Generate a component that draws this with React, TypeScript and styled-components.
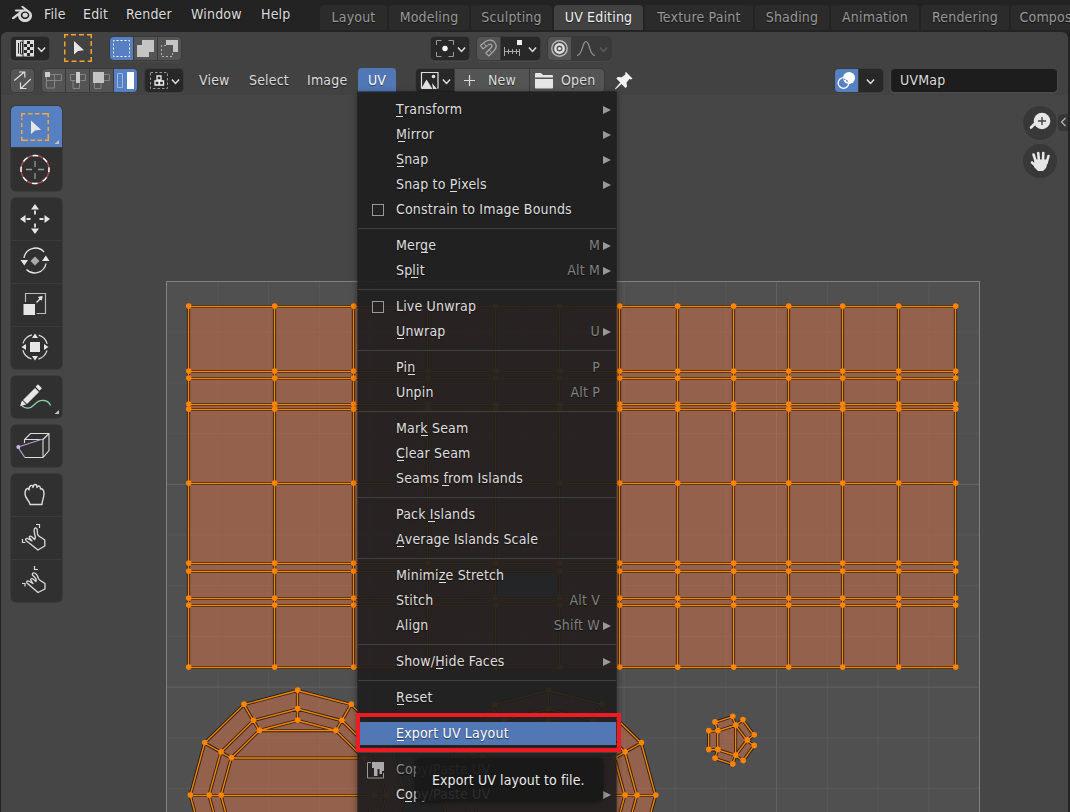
import React from 'react';
import styled, { createGlobalStyle, css } from 'styled-components';
import { SiBlender } from 'react-icons/si';

const GlobalStyle = createGlobalStyle`
  * { box-sizing: border-box; }
  body {
    margin: 0;
    overflow: hidden;
    background: #232323;
    color: #dcdcdc;
    font: 14px/25px 'DejaVu Sans Condensed', 'DejaVu Sans', sans-serif;
    letter-spacing: 0.18px;
    text-shadow: 0 1px 1px rgba(0, 0, 0, 0.55);
  }
  svg { display: block; flex: none; }
`;

const Window = styled.div`
  position: relative;
  display: flex;
  flex-direction: column;
  width: 1070px;
  height: 812px;
  overflow: hidden;
`;

const TopBar = styled.header`
  display: flex;
  flex: none;
  height: 32px;
  padding-left: 12px;
`;

const Logo = styled.div`
  flex: none;
  width: 32px;
  padding-top: 4px;
  color: #d8d8d8;
`;

const AppMenu = styled.span<{ $w: number }>`
  flex: none;
  width: ${(p) => p.$w}px;
  line-height: 28px;
`;

const Tabs = styled.nav`
  display: flex;
  flex: none;
  gap: 2px;
  padding-top: 5px;
`;

const Tab = styled.div<{ $w: number; $active?: boolean }>`
  flex: none;
  width: ${(p) => p.$w}px;
  height: 25px;
  border-radius: 4px 4px 0 0;
  text-align: center;
  white-space: nowrap;
  background: ${(p) => (p.$active ? '#424242' : '#2b2b2b')};
  color: ${(p) => (p.$active ? '#f0f0f0' : '#989898')};
`;

const Editor = styled.main`
  display: flex;
  flex-direction: column;
  flex: 1;
  min-height: 0;
  margin: 0 2px 0 1px;
  border-radius: 6px 6px 0 0;
  overflow: hidden;
  background: #424242;
`;

const HeaderRow = styled.div<{ $h: number; $top: number }>`
  display: flex;
  align-items: flex-start;
  flex: none;
  height: ${(p) => p.$h}px;
  padding: ${(p) => p.$top}px 0 0 10px;
`;

const Group = styled.div<{ $ml?: number }>`
  display: flex;
  flex: none;
  gap: 1px;
  height: 23px;
  margin-left: ${(p) => p.$ml ?? 0}px;
  border-radius: 4px;
  overflow: hidden;
  background: #3a3a3a;
  box-shadow: 0 0 0 1px #3b3b3b, 0 1px 0 1px #4a4a4a;
`;

const ActiveTool = styled.div`
  flex: none;
  margin: -3px 0 0 14px;
`;

const tones = { dark: '#282828', mid: '#545454', blue: '#5680c2', dim: '#3a3a3a' };

const Cell = styled.div<{ $w: number; $tone: keyof typeof tones }>`
  display: flex;
  flex: none;
  width: ${(p) => p.$w}px;
  height: 23px;
  line-height: 23px;
  background: ${(p) => tones[p.$tone]};
`;

const HeaderMenu = styled.span<{ $w: number; $ml?: number }>`
  width: ${(p) => p.$w}px;
  margin-left: ${(p) => p.$ml ?? 0}px;
  line-height: 23px;
`;

const ActiveMenu = styled.div`
  width: 38px;
  height: 25px;
  margin-top: -1px;
  border-radius: 4px 4px 0 0;
  background: #5277b5;
  color: #fff;
  text-align: center;
`;

const Field = styled.div`
  width: 166px;
  height: 23px;
  margin-left: 8px;
  padding-left: 9px;
  border-radius: 4px;
  background: #1d1d1d;
  line-height: 23px;
  box-shadow: 0 1px 0 1px #4a4a4a;
`;

const Canvas = styled.section`
  position: relative;
  display: flex;
  justify-content: space-between;
  flex: 1;
  background: #464646;
`;

const Drawing = styled.svg`
  position: absolute;
  left: 0;
  top: 0;
`;

const Palette = styled.div`
  position: relative;
  display: flex;
  flex-direction: column;
  gap: 7px;
  padding: 11px 0 0 10px;
`;

const ToolGroup = styled.div`
  display: flex;
  flex-direction: column;
  gap: 1px;
  width: 51px;
  border-radius: 5px;
  overflow: hidden;
  background: #3a3a3a;
  box-shadow: 0 0 0 1px #3c3c3c;
`;

const Tool = styled.div<{ $h: number; $active?: boolean }>`
  height: ${(p) => p.$h}px;
  background: ${(p) => (p.$active ? '#5680c2' : '#303030')};
`;

const Gizmos = styled.div`
  position: relative;
  display: flex;
  align-items: flex-start;
  gap: 1px;
  padding-top: 11px;
`;

const GizmoColumn = styled.div`
  display: flex;
  flex-direction: column;
  gap: 4px;
`;

const Gizmo = styled.div`
  width: 34px;
  height: 34px;
  border-radius: 50%;
  background: #383838;
`;

const SidebarHandle = styled.div`
  width: 10px;
  height: 17px;
  margin-top: 8px;
  border-radius: 4px 0 0 4px;
  background: #363636;
`;

const Dropdown = styled.div`
  position: absolute;
  left: 358px;
  top: 92px;
  width: 258px;
  height: 730px;
  padding-top: 5px;
  background: rgba(30, 30, 30, 0.92);
  box-shadow: 0 0 0 1px rgba(20, 20, 20, 0.45), 0 2px 6px 1px rgba(0, 0, 0, 0.4);
`;

const Item = styled.div<{ $hot?: boolean; $disabled?: boolean }>`
  display: grid;
  grid-template-columns: 38px 1fr auto 16px;
  align-items: center;
  height: 25px;
  white-space: nowrap;
  color: ${(p) => (p.$disabled ? '#8a8a8a' : '#dedede')};
  ${(p) =>
    p.$hot &&
    css`
      color: #fff;
      background: linear-gradient(#5277b5, #5277b5) 2px 1px / 256px 23px no-repeat;
    `}
`;

const Mark = styled.span<{ $pad?: number }>`
  display: flex;
  padding-left: ${(p) => p.$pad ?? 14}px;
`;

const CheckBox = styled.span`
  width: 12px;
  height: 12px;
  border: 1px solid #999;
`;

const Shortcut = styled.span`
  color: #808080;
`;

const Arrow = styled.span`
  width: 8px;
  height: 8px;
  margin: 1px 0 0 3px;
  background: #999;
  clip-path: polygon(0 0, 100% 50%, 0 100%);
`;

const Rule = styled.div`
  height: 11px;
  padding-top: 6px;
  &::before {
    content: '';
    display: block;
    height: 1px;
    background: #414141;
  }
`;

const Key = styled.span`
  position: relative;
  &::after {
    content: '';
    position: absolute;
    left: calc(50% - 3.5px);
    top: 15px;
    width: 7px;
    height: 1px;
    background: currentColor;
  }
`;

const Callout = styled.div`
  position: absolute;
  left: 356px;
  top: 713px;
  width: 265px;
  height: 39px;
  border: 4px solid #ed1c24;
`;

const Tooltip = styled.div`
  position: absolute;
  left: 416px;
  top: 758px;
  width: 187px;
  height: 43px;
  padding-left: 16px;
  border-radius: 5px;
  background: rgba(24, 24, 24, 0.9);
  color: #eee;
  line-height: 45px;
  letter-spacing: 0.1px;
  box-shadow: 0 1px 5px rgba(0, 0, 0, 0.5);
`;

/* Icon artwork shares the window's coordinates: each icon shows its own part. */
function Icon({ box, children }: { box: string; children: React.ReactNode }) {
  const [, , w, h] = box.split(' ');
  return (
    <svg width={w} height={h} viewBox={box} fill="none" stroke="#dcdcdc">
      {children}
    </svg>
  );
}

const Chevron = ({ x, y, color = '#dcdcdc' }: { x: number; y: number; color?: string }) => (
  <path d={`M${x - 3.6} ${y - 2}l3.6 4 3.6-4`} stroke={color} strokeWidth="1.5" />
);

const Pointer = ({ x, y }: { x: number; y: number }) => (
  <path d={`M${x} ${y}v13.5l4-3.6 6-.7z`} fill="#e6e6e6" stroke="none" />
);

type Pt = [number, number];

const gridX = [188.5, 274.5, 353.5, 427.5, 495.5, 559.5, 619.5, 677.5, 733.5, 788.5, 842.5, 898.5, 955.5];
const gridY = [306.5, 371.5, 378.5, 404.5, 409.5, 483.5, 563.5, 571.5, 598.5, 605.5, 667.5];

function buildMesh() {
  const faces: Pt[][] = [];
  for (let i = 0; i < gridX.length - 1; i++)
    for (let j = 0; j < gridY.length - 1; j++) {
      if (i === 4 && j === 7) continue;
      faces.push([
        [gridX[i], gridY[j]],
        [gridX[i + 1], gridY[j]],
        [gridX[i + 1], gridY[j + 1]],
        [gridX[i], gridY[j + 1]],
      ]);
    }
  const radii: Pt[] = [[107.3, 105], [88.5, 86.5], [76.5, 75]];
  for (const cx of [297.5, 548.3]) {
    const rings = radii.map(([rx, ry]) =>
      Array.from({ length: 12 }, (_, k): Pt => [
        cx + rx * Math.sin((k * Math.PI) / 6),
        795.5 - ry * Math.cos((k * Math.PI) / 6),
      ]),
    );
    for (let r = 0; r < 2; r++)
      for (let k = 0; k < 12; k++) {
        const n = (k + 1) % 12;
        faces.push([rings[r][k], rings[r][n], rings[r + 1][n], rings[r + 1][k]]);
      }
    const c = rings[2];
    faces.push([c[11], c[0], c[1]], [c[11], c[1], c[2], c[10]], [c[10], c[2], c[3], c[9]], [c[9], c[3], c[4], c[8]]);
  }
  const a: Pt = [717.7, 731], b: Pt = [735.6, 725.3], c: Pt = [747, 740.3], d: Pt = [735.6, 755.5], e: Pt = [717.7, 749.8];
  faces.push(
    [a, b, d, e],
    [b, c, d],
    [[708.6, 731], a, e, [708.6, 749.8]],
    [[714.8, 722.3], [732.6, 716.6], b, a],
    [[742.8, 720], [754, 735.2], c, b],
    [[754, 745.8], [743, 761], d, c],
    [[732.6, 764.3], [714.8, 758.5], e, d],
  );
  const path = faces.map((f) => 'M' + f.map((p) => p.join(' ')).join('L') + 'Z').join('');
  const dots = new Map<string, Pt>();
  faces.flat().forEach((p) => dots.set(p.map((v) => v.toFixed(1)).join(), p));
  return { path, dots: [...dots.values()] };
}

const mesh = buildMesh();

function UvDrawing() {
  const minor: string[] = [];
  const major: string[] = [];
  for (let i = 1; i < 16; i++) {
    const x = 167 + i * 50.8;
    const y = 281.5 + i * 50.7;
    const to = i % 4 ? minor : major;
    to.push(`M${x} 282V812`);
    if (y < 812) to.push(`M167 ${y}H979`);
  }
  return (
    <Drawing width="1067" height="717" viewBox="1 95 1067 717" fill="none">
      <rect x="166.5" y="281.5" width="813" height="813" fill="#505050" />
      <path d={minor.join('')} stroke="#585858" />
      <path d={major.join('')} stroke="#646464" />
      <rect x="166.5" y="281.5" width="813" height="813" stroke="#808080" />
      <path d={mesh.path} fill="#ff7d47" fillOpacity=".385" />
      <rect x="495.5" y="571.5" width="64" height="27" fill="#566f7d" />
      <path d={mesh.path} stroke="#17100b" strokeOpacity=".8" strokeWidth="3.2" strokeLinejoin="round" />
      <path d={mesh.path} stroke="#f58300" strokeWidth="1.4" />
      {mesh.dots.map(([x, y]) => (
        <circle key={`${x},${y}`} cx={x + 0.2} cy={y - 0.4} r="2.8" fill="#ff8500" />
      ))}
    </Drawing>
  );
}

type Entry = { label: string; key?: number; sub?: boolean; short?: string; check?: boolean; hot?: boolean; uv?: boolean };

const menu: Entry[][] = [
  [
    { label: 'Transform', key: 0, sub: true },
    { label: 'Mirror', key: 0, sub: true },
    { label: 'Snap', key: 0, sub: true },
    { label: 'Snap to Pixels', key: 8, sub: true },
    { label: 'Constrain to Image Bounds', check: true },
  ],
  [
    { label: 'Merge', key: 3, short: 'M', sub: true },
    { label: 'Split', key: 2, short: 'Alt M', sub: true },
  ],
  [
    { label: 'Live Unwrap', check: true },
    { label: 'Unwrap', key: 0, short: 'U', sub: true },
  ],
  [
    { label: 'Pin', key: 2, short: 'P' },
    { label: 'Unpin', short: 'Alt P' },
  ],
  [
    { label: 'Mark Seam', key: 3 },
    { label: 'Clear Seam', key: 0 },
    { label: 'Seams from Islands', key: 6 },
  ],
  [
    { label: 'Pack Islands', key: 5 },
    { label: 'Average Islands Scale', key: 0 },
  ],
  [
    { label: 'Minimize Stretch', key: 6 },
    { label: 'Stitch', short: 'Alt V' },
    { label: 'Align', short: 'Shift W', sub: true },
  ],
  [{ label: 'Show/Hide Faces', key: 5, sub: true }],
  [{ label: 'Reset', key: 0 }],
  [{ label: 'Export UV Layout', key: 0, hot: true }],
  [
    { label: 'Copy/Paste UV', uv: true },
    { label: 'Copy/Paste UV', key: 1, sub: true },
  ],
];

function Label({ text, at }: { text: string; at?: number }) {
  if (at === undefined) return <span>{text}</span>;
  return (
    <span>
      {text.slice(0, at)}
      <Key>{text[at]}</Key>
      {text.slice(at + 1)}
    </span>
  );
}

function UvMenu() {
  return (
    <Dropdown>
      {menu.map((section, s) => (
        <React.Fragment key={s}>
          {s > 0 && <Rule />}
          {section.map((item, i) => (
            <Item key={i} $hot={item.hot} $disabled={item.uv}>
              <Mark $pad={item.uv ? 9 : 14}>
                {item.check && <CheckBox />}
                {item.uv && (
                  <Icon box="367 760 18 18">
                    <path d="M371 761.500h-3.500v15.500h16v-5" stroke="#999" />
                    <path d="M372 761h12v9h-2v3h-2.500v-5h-2v7H374v-8h-2z" fill="#aaa" stroke="none" />
                  </Icon>
                )}
              </Mark>
              <Label text={item.label} at={item.key} />
              <Shortcut>{item.short}</Shortcut>
              {item.sub && <Arrow />}
            </Item>
          ))}
        </React.Fragment>
      ))}
    </Dropdown>
  );
}

const appMenus: [string, number][] = [['File', 39], ['Edit', 43], ['Render', 65], ['Window', 70], ['Help', 59]];
const workspaces: [string, number][] = [
  ['Layout', 67], ['Modeling', 80], ['Sculpting', 81], ['UV Editing', 89], ['Texture Paint', 108],
  ['Shading', 74], ['Animation', 88], ['Rendering', 88], ['Compositing', 98],
];

export default function App() {
  return (
    <Window>
      <GlobalStyle />
      <TopBar>
        <Logo><SiBlender size={20} /></Logo>
        {appMenus.map(([name, w]) => <AppMenu key={name} $w={w}>{name}</AppMenu>)}
        <Tabs>
          {workspaces.map(([name, w]) => (
            <Tab key={name} $w={w} $active={name === 'UV Editing'}>{name}</Tab>
          ))}
        </Tabs>
      </TopBar>

      <Editor>
        <HeaderRow $h={32} $top={5}>
          <Group>
            <Cell $w={38} $tone="dark">
              <Icon box="11 37 38 23">
                <path d="M16 40h18v16.500h-18z" fill="#dcdcdc" stroke="none" />
                <path d="M18.500 43v10.500M20.500 42h2v12h-2z" stroke="#282828" strokeWidth="1" />
                <path d="M23 40v17" stroke="#282828" />
                <path d="M27 41h3v3h-3zM24 44h3v3h-3zM30 44h3v3h-3zM27 47h3v3h-3zM24 50h3v3h-3zM30 50h3v3h-3zM27 53h3v3h-3z" fill="#282828" stroke="none" />
                <Chevron x={41.5} y={49.5} />
              </Icon>
            </Cell>
          </Group>
          <ActiveTool>
            <Icon box="63 34 30 28">
              <path d="M64.750 38v-3.250h3.500M71 34.750h5M79 34.750h5M87 34.750h4.250v3.500M91.250 41v5M91.250 49v5M91.250 57v4.250h-3.500M84.500 61.250h-5M76.500 61.250h-5M68.500 61.250h-3.750v-3.500M64.750 54.500v-5M64.750 46.500v-5" stroke="#f2a32c" strokeWidth="1.5" />
              <Pointer x={74} y={41} />
            </Icon>
          </ActiveTool>
          <Group $ml={17}>
            <Cell $w={23} $tone="blue">
              <Icon box="110 37 23 23">
                <rect x="113.500" y="40.500" width="16" height="16" stroke="#fff" strokeDasharray="2 2" strokeDashoffset="1" />
              </Icon>
            </Cell>
            <Cell $w={23} $tone="mid">
              <Icon box="134 37 23 23">
                <path d="M142 40h12v12h-5v5h-12v-12h5z" fill="#c4c4c4" stroke="none" />
              </Icon>
            </Cell>
            <Cell $w={23} $tone="mid">
              <Icon box="158 37 23 23">
                <path d="M166 40h12v12h-5v-7h-7z" fill="#c4c4c4" stroke="none" />
                <path d="M166 45.500h-4.500v11h11v-4" stroke="#b5b5b5" strokeDasharray="2 2" />
              </Icon>
            </Cell>
          </Group>
          <Group $ml={250}>
            <Cell $w={38} $tone="dark">
              <Icon box="431 37 38 23">
                <path d="M436.500 45v-4.500h5M448.500 40.500h5v4.500M453.500 52v4.500h-5M441.500 56.500h-5v-4.500" stroke="#999" />
                <circle cx="445" cy="48.500" r="2.700" fill="#fff" stroke="none" />
                <Chevron x={461.5} y={49.5} />
              </Icon>
            </Cell>
          </Group>
          <Group $ml={8}>
            <Cell $w={23} $tone="mid">
              <Icon box="477 37 23 23">
                <path d="M480.500 45.500l5-4c3.500-2.500 7.500-1.500 9.300 1s1.500 6-1 8.500l-5 5-3-3 5-5c1.300-1.300 1.500-2.500.7-3.300s-2-.8-3.200.2l-5.300 4z" stroke="#a6a6a6" strokeWidth="1.200" />
                <path d="M483.500 43l2.800 3.300M488.500 49.500l3 3" stroke="#a6a6a6" />
              </Icon>
            </Cell>
            <Cell $w={39} $tone="dark">
              <Icon box="501 37 39 23">
                <path d="M504.500 47v9M519.500 49v7M504 51.500h16M508.500 49v5M512.500 49v5M516.500 49v5" stroke="#aaa" />
                <path d="M517 40h5v5h-5z" fill="#eee" stroke="none" />
                <Chevron x={532.5} y={49.5} />
              </Icon>
            </Cell>
          </Group>
          <Group $ml={8}>
            <Cell $w={23} $tone="mid">
              <Icon box="548 37 23 23">
                <circle cx="559.500" cy="48.500" r="7.700" stroke="#b8b8b8" strokeWidth="1.400" />
                <circle cx="559.500" cy="48.500" r="4.200" stroke="#e0e0e0" strokeWidth="2.400" />
                <circle cx="559.500" cy="48.500" r="1.600" fill="#e8e8e8" stroke="none" />
              </Icon>
            </Cell>
            <Cell $w={39} $tone="dim">
              <Icon box="572 37 39 23">
                <path d="M577 55.500c6 0 5-14 9-14s3 14 9 14" stroke="#999" strokeWidth="1.200" />
                <Chevron x={603.5} y={49.5} color="#5c5c5c" />
              </Icon>
            </Cell>
          </Group>
        </HeaderRow>

        <HeaderRow $h={31} $top={5}>
          <Group>
            <Cell $w={23} $tone="mid">
              <Icon box="11 69 23 23">
                <path d="M14.300 80.500l10-8.500M19 72h5.800v5.500M30.800 79l-9.800 9.500M26.500 88.500h-6v-6" stroke="#e0e0e0" strokeWidth="1.200" />
              </Icon>
            </Cell>
          </Group>
          <Group $ml={8}>
            <Cell $w={23} $tone="mid">
              <Icon box="42 69 23 23">
                <path d="M50 74.500h11.500v6H46.500v-4M46.500 80v8h8v-14" stroke="#858585" />
                <path d="M45 72h5v5h-5z" fill="#ccc" stroke="none" />
              </Icon>
            </Cell>
            <Cell $w={23} $tone="mid">
              <Icon box="66 69 23 23">
                <path d="M75 74.500h-4.500v6h5M80 74.500h5.500v6h-5M73 80.500v8h6.500v-5" stroke="#858585" />
                <path d="M76 72h4v11h-4z" fill="#ccc" stroke="none" />
              </Icon>
            </Cell>
            <Cell $w={23} $tone="mid">
              <Icon box="90 69 23 23">
                <path d="M104 74.500h5.500v6H104M94.500 83v5.500h6.500V83" stroke="#858585" />
                <path d="M93 72h11v11H93z" fill="#c4c4c4" stroke="none" />
              </Icon>
            </Cell>
            <Cell $w={23} $tone="blue">
              <Icon box="114 69 23 23">
                <path d="M117.500 73.500h5v14h-5z" stroke="#9db8e6" />
                <path d="M127 72h7v17h-7z" fill="#fff" stroke="none" />
              </Icon>
            </Cell>
          </Group>
          <Group $ml={8}>
            <Cell $w={38} $tone="dark">
              <Icon box="145 69 38 23">
                <rect x="150.500" y="72.500" width="17" height="16" stroke="#999" strokeDasharray="2.500 2" />
                <path d="M157 76h4v4h-4zM155 81h4v4h-4zM159.500 81h4v4h-4z" stroke="#eee" strokeWidth="1.300" />
                <Chevron x={175.5} y={81.5} />
              </Icon>
            </Cell>
          </Group>
          <HeaderMenu $w={50} $ml={16}>View</HeaderMenu>
          <HeaderMenu $w={58}>Select</HeaderMenu>
          <HeaderMenu $w={51}>Image</HeaderMenu>
          <ActiveMenu>UV</ActiveMenu>
          <Group $ml={20}>
            <Cell $w={38} $tone="dark">
              <Icon box="416 69 38 23">
                <path d="M421.500 88v-15.500h16.500v15.500h-1" stroke="#ddd" strokeWidth="1.200" />
                <path d="M421 89l5.500-9.500 6 9.500zM432 83l5 6h-4z" fill="#e0e0e0" stroke="none" />
                <circle cx="433.500" cy="76.500" r="1.800" fill="#e0e0e0" stroke="none" />
                <Chevron x={446.5} y={81.5} />
              </Icon>
            </Cell>
            <Cell $w={74} $tone="mid">
              <Icon box="455 69 33 23"><path d="M464 80.500h11M469.500 75v11" strokeWidth="1.200" /></Icon>
              New
            </Cell>
            <Cell $w={74} $tone="mid">
              <Icon box="530 69 31 23">
                <path d="M535 74q0-1 1-1h5l2 2h9q1 0 1 1v1.500h-18zM535 79h18v8.500q0 1-1 1h-16q-1 0-1-1z" fill="#e6e6e6" stroke="none" />
              </Icon>
              Open
            </Cell>
          </Group>
          <Icon box="604 69 30 23">
            <path d="M626 72l6.500 6.500-1.500 1-1.500-.5-3 3.500.5 4-1.500 1.500-4-4-5.500 5-1 .3.300-1 5-5.800-4-4 1.500-1.500 4 .3 3.700-3-.5-1.300z" fill="#f2f2f2" stroke="none" />
          </Icon>
          <Group $ml={201}>
            <Cell $w={23} $tone="blue">
              <Icon box="835 69 23 23">
                <circle cx="843.500" cy="83" r="5.300" stroke="#fff" strokeWidth="1.300" />
                <circle cx="849" cy="78" r="6" fill="#fff" stroke="none" />
                <path d="M843.500 79a5.300 5.300 0 0 1 4.500 4" stroke="#5680c2" strokeWidth="1.200" strokeDasharray="2 1" />
              </Icon>
            </Cell>
            <Cell $w={24} $tone="dark">
              <Icon box="859 69 24 23"><Chevron x={870.5} y={81.5} /></Icon>
            </Cell>
          </Group>
          <Field>UVMap</Field>
        </HeaderRow>

        <Canvas>
          <UvDrawing />
          <Palette>
            <ToolGroup>
              <Tool $h={41} $active>
                <Icon box="11 106 51 41">
                  <path d="M21.750 117v-3.250h3.500M28 113.750h4.500M35 113.750h4.500M42 113.750h6.250v3.500M48.250 120v4M48.250 127v4M48.250 134v6.250h-3.500M42 140.250h-4.500M35 140.250h-4.500M28 140.250h-6.250v-3.500M21.750 134v-4M21.750 127v-4M21.750 120v-2" stroke="#f2a83c" strokeWidth="1.500" />
                  <Pointer x={31} y={120.5} />
                  <path d="M59 140v4h-4.500z" fill="#c4c4c4" stroke="none" />
                </Icon>
              </Tool>
              <Tool $h={43}>
                <Icon box="11 147 51 43">
                  <circle cx="35" cy="168.500" r="14" stroke="#a34a4a" strokeWidth="1.500" />
                  <circle cx="35" cy="168.500" r="14" stroke="#fff" strokeWidth="1.500" strokeDasharray="5.500 5.495" strokeDashoffset="2.750" />
                  <path d="M35 160v6M35 172v6M26 168.500h6M38 168.500h6" stroke="#999" strokeWidth="1.300" />
                </Icon>
              </Tool>
            </ToolGroup>
            <ToolGroup>
              <Tool $h={42}>
                <Icon box="11 198 51 42">
                  <path d="M35 204l4 5.500h-8zM35 234l4-5.500h-8zM20 219l5.500-4v8zM50 219l-5.500-4v8z" fill="#e6e6e6" stroke="none" />
                  <path d="M35 210.500v4M35 223.500v4M26.500 219h4M39.500 219h4" stroke="#e6e6e6" strokeWidth="1.800" />
                </Icon>
              </Tool>
              <Tool $h={42}>
                <Icon box="11 241 51 42">
                  <path d="M24 258a11.500 11.500 0 0 1 20-6M46 263.500a11.500 11.500 0 0 1-19.500 6" stroke="#e6e6e6" strokeWidth="1.300" />
                  <path d="M20.500 260h7.500l-3.700 5.500zM42 261h7.500l-3.700-5.500z" fill="#e6e6e6" stroke="none" />
                  <path d="M35 256.500l4.500 4.500-4.500 4.500-4.500-4.500z" fill="#aaa" stroke="none" />
                </Icon>
              </Tool>
              <Tool $h={42}>
                <Icon box="11 284 51 42">
                  <path d="M25.500 302v-8.500h20v20h-9" stroke="#bbb" strokeWidth="1.200" />
                  <path d="M23.500 304h11.500v11h-11.500z" fill="#e6e6e6" stroke="none" />
                  <path d="M36.500 302.500l4-4" strokeWidth="1.500" />
                  <path d="M38.500 297.300l3.700-.8-.8 3.700z" fill="#e6e6e6" stroke="#e6e6e6" />
                </Icon>
              </Tool>
              <Tool $h={42}>
                <Icon box="11 327 51 42">
                  <circle cx="35" cy="347" r="12.500" stroke="#ddd" strokeWidth="1.200" strokeDasharray="12.600 7" strokeDashoffset="-3.500" />
                  <path d="M30 342h10v10H30zM35 333.500l3 4.500h-6zM35 360.500l3-4.500h-6zM21.500 347l4.500-3v6zM48.500 347l-4.500-3v6z" fill="#e6e6e6" stroke="none" />
                </Icon>
              </Tool>
            </ToolGroup>
            <ToolGroup>
              <Tool $h={42}>
                <Icon box="11 376 51 42">
                  <path d="M21.500 405.500c4 3.500 9 3.500 13-1s7-4.500 10-4 5 2.500 6 5" stroke="#87d1a6" strokeWidth="1.300" />
                  <path d="M23 400l12-12 4 4-12 12z" fill="#e6e6e6" stroke="none" />
                  <path d="M36.500 386.800l1.500-1.500 3 3-1.500 1.500z" fill="#e6e6e6" stroke="#e6e6e6" strokeWidth="1.400" strokeLinejoin="round" />
                  <path d="M22.300 401l3.200 3.200-4.800 1.300z" fill="#e6e6e6" stroke="#e6e6e6" />
                  <path d="M59 410v4h-4.500z" fill="#c4c4c4" stroke="none" />
                </Icon>
              </Tool>
            </ToolGroup>
            <ToolGroup>
              <Tool $h={42}>
                <Icon box="11 425 51 42">
                  <path d="M24.500 443v-3.500l6-6h18.500v17l-6 7H24.500M24.500 439.500h18.500v18M43 439.500l6-6" stroke="#ddd" strokeWidth="1.100" />
                  <path d="M43 439l-25 8 6.500 10" stroke="#b89ccf" strokeWidth="1.200" />
                  <circle cx="18.300" cy="447" r="2" fill="#cdb2e3" stroke="none" />
                </Icon>
              </Tool>
            </ToolGroup>
            <ToolGroup>
              <Tool $h={42}>
                <Icon box="11 474 51 42">
                  <path d="M30 504.500c-.5-4-5-6-5-10.500 0-3 1-5 2.500-5.500 1-.3 1.500.5 1.500 1.500 0-3 .5-4 2-4.500s2 .5 2 2c.3-2 1-3 2.200-3s1.800 1 1.800 3c.5-1 1.300-1.700 2.300-1.300s1.200 1.500 1.200 2.800c1-.5 3.500 0 3.500 4.500 0 5-2 7-2 11z" strokeWidth="1.400" strokeLinejoin="round" />
                </Icon>
              </Tool>
              <Tool $h={42}>
                <Icon box="11 517 51 42">
                  <path d="M38 550l-12-9.500c-1-1 0-2.500 1.500-2l4.500 2.500-2.500-3c-1-1.500 1-2.500 2-1.500l3 3c1-1 1-3 .3-5s-1.300-6 .5-6.500 2 2 2 4 .5 3.500 1.500 4l6 4v6l-7 4z" strokeWidth="1.300" strokeLinejoin="round" />
                  <path d="M36 524.500h3.500v3.500M22.500 539v3.500h3" strokeWidth="1.200" />
                </Icon>
              </Tool>
              <Tool $h={42}>
                <Icon box="11 560 51 42">
                  <path d="M38 592.500l-11-9.500c-1-1 0-2.500 1.500-2l4.500 2.500-2-3c-1-1.500 1-2.500 2-1.500l3 2.500c.5-2-.5-4-2-5-1.300-1-2.500-1.500-1.500-3s4 0 5 2.500c.7 2 1 3.500 2 4l5.500 3.500v5.500z" strokeWidth="1.300" strokeLinejoin="round" />
                  <path d="M34.500 566v3.500h3.500M22 583.500h3v3" strokeWidth="1.200" />
                </Icon>
              </Tool>
            </ToolGroup>
          </Palette>
          <Gizmos>
            <GizmoColumn>
              <Gizmo>
                <Icon box="1023 106 34 34">
                  <path d="M1031 127.500l6-6" stroke="#e6e6e6" strokeWidth="2.600" strokeLinecap="round" />
                  <circle cx="1042" cy="121" r="8.300" fill="#e6e6e6" stroke="none" />
                  <path d="M1038 121h8M1042 117v8" stroke="#444" strokeWidth="1.400" />
                </Icon>
              </Gizmo>
              <Gizmo>
                <Icon box="1023 144 34 34">
                  <path d="M1036 162l-2.500-7.500M1039 161l-.8-8M1043 161l.3-8M1046.500 163l2-7M1037 167l-5-4.500" stroke="#e6e6e6" strokeWidth="2.600" strokeLinecap="round" />
                  <path d="M1034.500 159.500h12.500l1 2-2 6.500-3 3h-5l-4-4z" fill="#e6e6e6" stroke="none" />
                </Icon>
              </Gizmo>
            </GizmoColumn>
            <SidebarHandle>
              <Icon box="1058 114 10 17"><path d="M1065.500 118l-4 4 4 4" stroke="#bbb" strokeWidth="1.200" /></Icon>
            </SidebarHandle>
          </Gizmos>
        </Canvas>
      </Editor>

      <UvMenu />
      <Callout />
      <Tooltip>Export UV layout to file.</Tooltip>
    </Window>
  );
}
